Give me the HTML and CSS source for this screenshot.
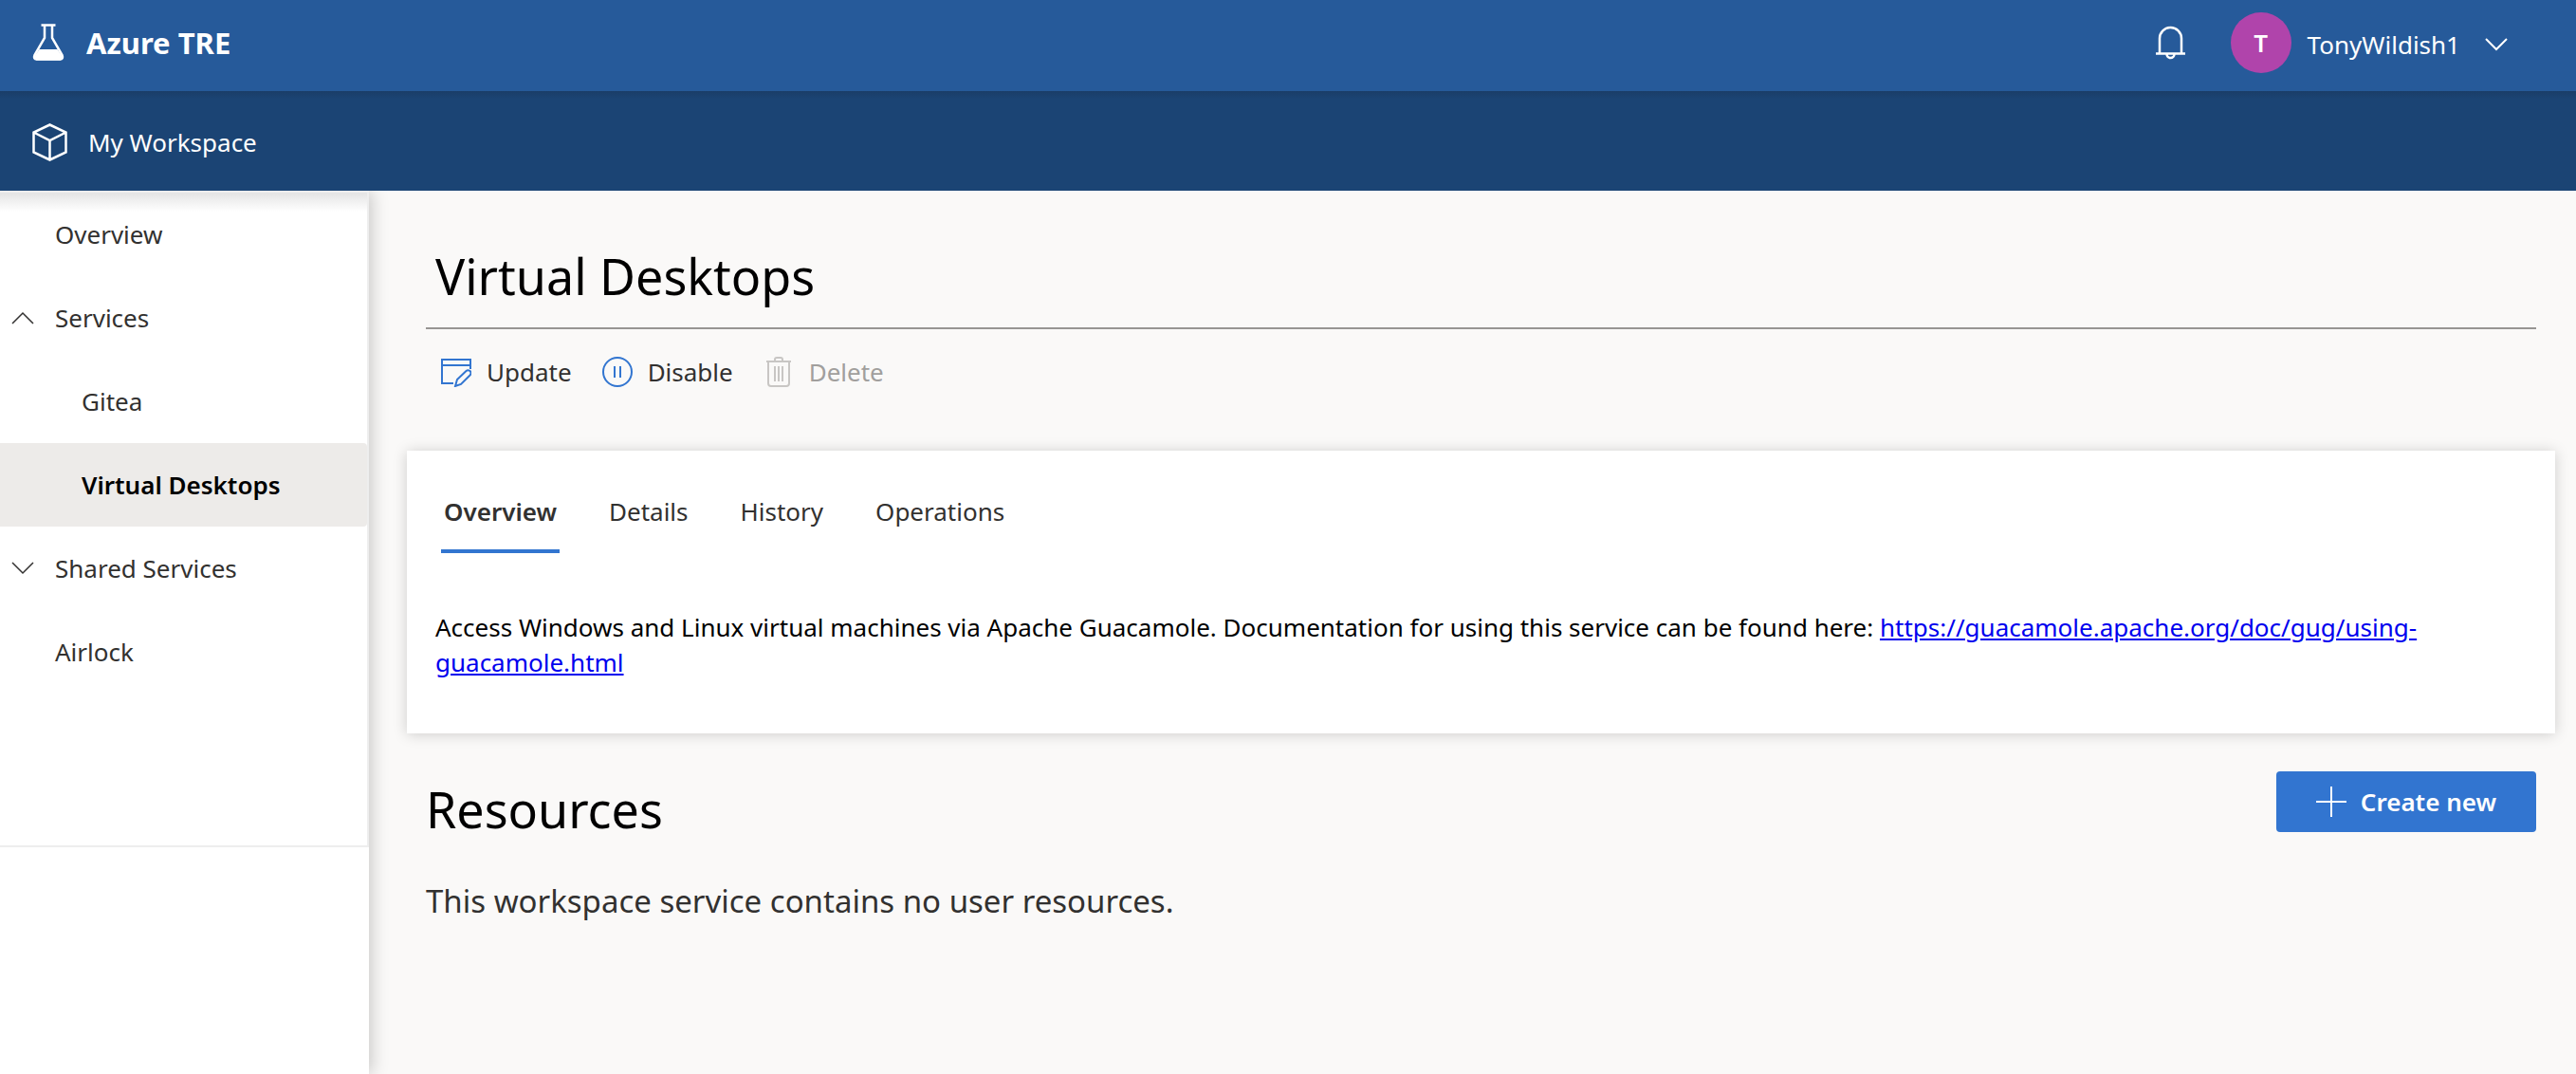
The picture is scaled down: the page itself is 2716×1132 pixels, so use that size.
FILE: index.html
```
<!DOCTYPE html>
<html lang="en">
<head>
<meta charset="utf-8">
<meta name="viewport" content="width=device-width, initial-scale=1">
<title>Azure TRE</title>
<link rel="stylesheet" href="styles.css">
</head>
<body>
<header class="top-bar">
  <a class="brand" href="#">
    <svg class="bar-icon" viewBox="0 0 38 40" aria-hidden="true"><path d="M9.500 1.500h15M13 2v13L2.500 33c-1.200 3 0 4.500 2 4.500h25c2 0 3.200-1.500 2-4.500L21 15V2" fill="none" stroke="#fff" stroke-width="2.500"/><path d="M7.500 27h19l5.500 8-2 3.500H4L2 35z" fill="#fff"/></svg>
    Azure TRE
  </a>
  <div class="account">
    <button class="bell" type="button" aria-label="Notifications">
      <svg viewBox="0 0 31 36" width="31" height="36"><path d="M0 29.500h31M4 29V13.500a11.500 11.500 0 0 1 23 0V29M11.500 30a4 4 0 0 0 8 0" fill="none" stroke="#fff" stroke-width="2.500"/></svg>
    </button>
    <button class="persona" type="button">
      <span class="avatar">T</span>
      <span class="persona-name">TonyWildish1
        <svg viewBox="0 0 24 14" width="24" height="14" aria-hidden="true"><path d="M1 1l11 11L23 1" fill="none" stroke="#fff" stroke-width="2"/></svg>
      </span>
    </button>
  </div>
</header>
<div class="workspace-bar">
  <a class="workspace-link" href="#">
    <svg class="bar-icon" viewBox="0 0 38 40" aria-hidden="true"><path d="M18.500 1.500L35.500 9.500v21L18.500 38.500 1.500 30.500v-21zM1.500 9.500l17 8.500 17-8.500M18.500 18v20.500" fill="none" stroke="#fff" stroke-width="2.500"/></svg>
    My Workspace
  </a>
</div>
<div class="layout">
  <aside class="sidebar">
    <nav class="nav" aria-label="Workspace">
      <a class="nav-item" href="#">Overview</a>
      <button class="nav-item" type="button" aria-expanded="true">
        <svg class="chevron" viewBox="0 0 24 14" aria-hidden="true"><path d="M1 13L12 2l11 11" fill="none" stroke="#323130" stroke-width="1.500"/></svg>Services</button>
      <a class="nav-item nav-child" href="#">Gitea</a>
      <a class="nav-item nav-child nav-selected" href="#" aria-current="page">Virtual Desktops</a>
      <button class="nav-item" type="button" aria-expanded="false">
        <svg class="chevron" viewBox="0 0 24 14" aria-hidden="true"><path d="M1 1l11 11L23 1" fill="none" stroke="#323130" stroke-width="1.500"/></svg>Shared Services</button>
      <a class="nav-item" href="#">Airlock</a>
    </nav>
  </aside>
  <main class="content">
    <section class="page-head">
      <h1 class="title">Virtual Desktops</h1>
      <div class="toolbar">
        <button class="tool" type="button">
          <svg viewBox="0 0 32 32" width="32" height="32" aria-hidden="true"><path d="M31 13V3H1v25h12M1 9h30" fill="none" stroke="#3275d0" stroke-width="2"/><path d="M15 31l2-7 9.500-9a3 3 0 0 1 4 4.500L21 29z" fill="none" stroke="#3275d0" stroke-width="2"/></svg>
          Update
        </button>
        <button class="tool" type="button">
          <svg viewBox="0 0 32 32" width="32" height="32" aria-hidden="true"><path d="M13 10v12M19 10v12M16 1a15 15 0 1 1 0 30 15 15 0 0 1 0-30z" fill="none" stroke="#3275d0" stroke-width="2"/></svg>
          Disable
        </button>
        <button class="tool" type="button" disabled>
          <svg viewBox="0 0 32 32" width="32" height="32" aria-hidden="true"><path d="M3 5h26M12 5V3q0-2 2-2h4q2 0 2 2v2M5 5v23q0 3 3 3h16q3 0 3-3V5M12 10v16M16 10v16M20 10v16" fill="none" stroke="#c8c6c4" stroke-width="2"/></svg>
          Delete
        </button>
      </div>
    </section>
    <section class="card">
      <div class="tabs" role="tablist">
        <button class="tab tab-selected" type="button" role="tab" aria-selected="true">Overview</button>
        <button class="tab" type="button" role="tab" aria-selected="false">Details</button>
        <button class="tab" type="button" role="tab" aria-selected="false">History</button>
        <button class="tab" type="button" role="tab" aria-selected="false">Operations</button>
      </div>
      <p class="description">Access Windows and Linux virtual machines via Apache Guacamole. Documentation for using this service can be found here: <a href="https://guacamole.apache.org/doc/gug/using-guacamole.html">https://guacamole.apache.org/doc/gug/using-guacamole.html</a></p>
    </section>
    <section class="resources">
      <div class="resources-head">
        <h2 class="resources-title">Resources</h2>
        <button class="create" type="button">
          <svg viewBox="0 0 32 32" width="32" height="32" aria-hidden="true"><path d="M16 0v32M0 16h32" stroke="#fff" stroke-width="2"/></svg>
          Create new
        </button>
      </div>
      <p class="empty">This workspace service contains no user resources.</p>
    </section>
  </main>
</div>
</body>
</html>
```
FILE: styles.css
```
* { box-sizing: border-box; }

body {
  display: flex;
  flex-direction: column;
  min-height: 100vh;
  margin: 0;
  background: #faf9f8;
  color: #323130;
  font-family: "Noto Sans", "Open Sans", sans-serif;
  font-size: 26px;
  line-height: 36px;
}

button {
  margin: 0;
  padding: 0;
  border: 0;
  background: none;
  color: inherit;
  font: inherit;
  cursor: pointer;
}

svg { display: block; flex: none; }

.top-bar {
  display: flex;
  align-items: center;
  justify-content: space-between;
  height: 96px;
  padding: 0 72px 6px 34px;
  background: #265a9a;
  color: #fff;
}

.brand,
.workspace-link {
  display: flex;
  align-items: center;
  gap: 19px;
  color: #fff;
  text-decoration: none;
}

.brand { font-size: 31px; font-weight: 700; }

.workspace-link { gap: 21px; }

.bar-icon { width: 38px; height: 40px; }

.account { display: flex; align-items: center; gap: 48px; }

.persona { display: flex; align-items: center; gap: 17px; }

.persona-name {
  display: flex;
  align-items: center;
  gap: 26px;
  padding-top: 4px;
}

.avatar {
  width: 64px;
  border-radius: 50%;
  background: #b044ab;
  font-weight: 600;
  line-height: 64px;
  text-align: center;
}

.workspace-bar {
  display: flex;
  align-items: center;
  height: 105px;
  padding: 3px 34px 0;
  background: linear-gradient(#1a3d68, #1b4474 8px);
}

.layout { display: flex; flex: 1; }

.sidebar {
  flex: none;
  width: 389px;
  background: #fff;
  box-shadow: 4px 0 16px rgba(0, 0, 0, 0.18);
  clip-path: inset(0 -40px 0 0);
}

.nav {
  min-height: 692px;
  border: 2px solid #eee;
  border-left: 0;
  background: linear-gradient(#e4e4e4, #fff) no-repeat 0 0 / 100% 20px;
}

.nav-item {
  display: flex;
  align-items: center;
  width: 100%;
  height: 88px;
  padding-left: 58px;
  color: #323130;
  text-align: left;
  text-decoration: none;
}

button.nav-item { padding-left: 12px; }

.chevron { width: 24px; height: 14px; margin-right: 22px; }

.nav-item.nav-child { padding-left: 86px; }

.nav-item.nav-selected {
  border-radius: 0 4px 4px 0;
  background: #edebe9;
  color: #000;
  font-weight: 600;
}

.content { flex: 1; min-width: 0; padding: 54px 22px 40px 40px; }

.page-head,
.resources { padding: 0 20px; }

.title,
.resources-title {
  margin: 0;
  color: #000;
  font-size: 52px;
  font-weight: 400;
  line-height: 72px;
}

.title { padding: 0 10px 18px; border-bottom: 2px solid #979593; }

.toolbar {
  display: flex;
  align-items: center;
  gap: 32px;
  height: 90px;
  padding-left: 16px;
}

.tool { display: flex; align-items: center; gap: 16px; }

.tool:disabled { color: #a19f9d; cursor: default; }

.card {
  margin-top: 38px;
  padding: 20px 30px 56px;
  background: #fff;
  box-shadow: 0 1px 14px rgba(0, 0, 0, 0.18);
}

.tabs { display: flex; gap: 49px; padding-left: 6px; }

.tab { height: 88px; padding: 0 3px; }

.tab-selected { box-shadow: inset 0 -4px #3275d0; font-weight: 600; }

.description { margin: 60px 0 0; color: #000; line-height: 37px; }

.description a { color: #00e; }

.resources-head {
  display: flex;
  align-items: flex-start;
  justify-content: space-between;
  padding-top: 40px;
}

.resources-title { margin-top: 4px; }

.create {
  display: flex;
  align-items: center;
  gap: 15px;
  height: 64px;
  padding: 0 42px;
  border-radius: 4px;
  background: #3275d0;
  color: #fff;
  font-weight: 600;
}

.empty { margin: 39px 0 0; font-size: 33px; line-height: 44px; }
```
